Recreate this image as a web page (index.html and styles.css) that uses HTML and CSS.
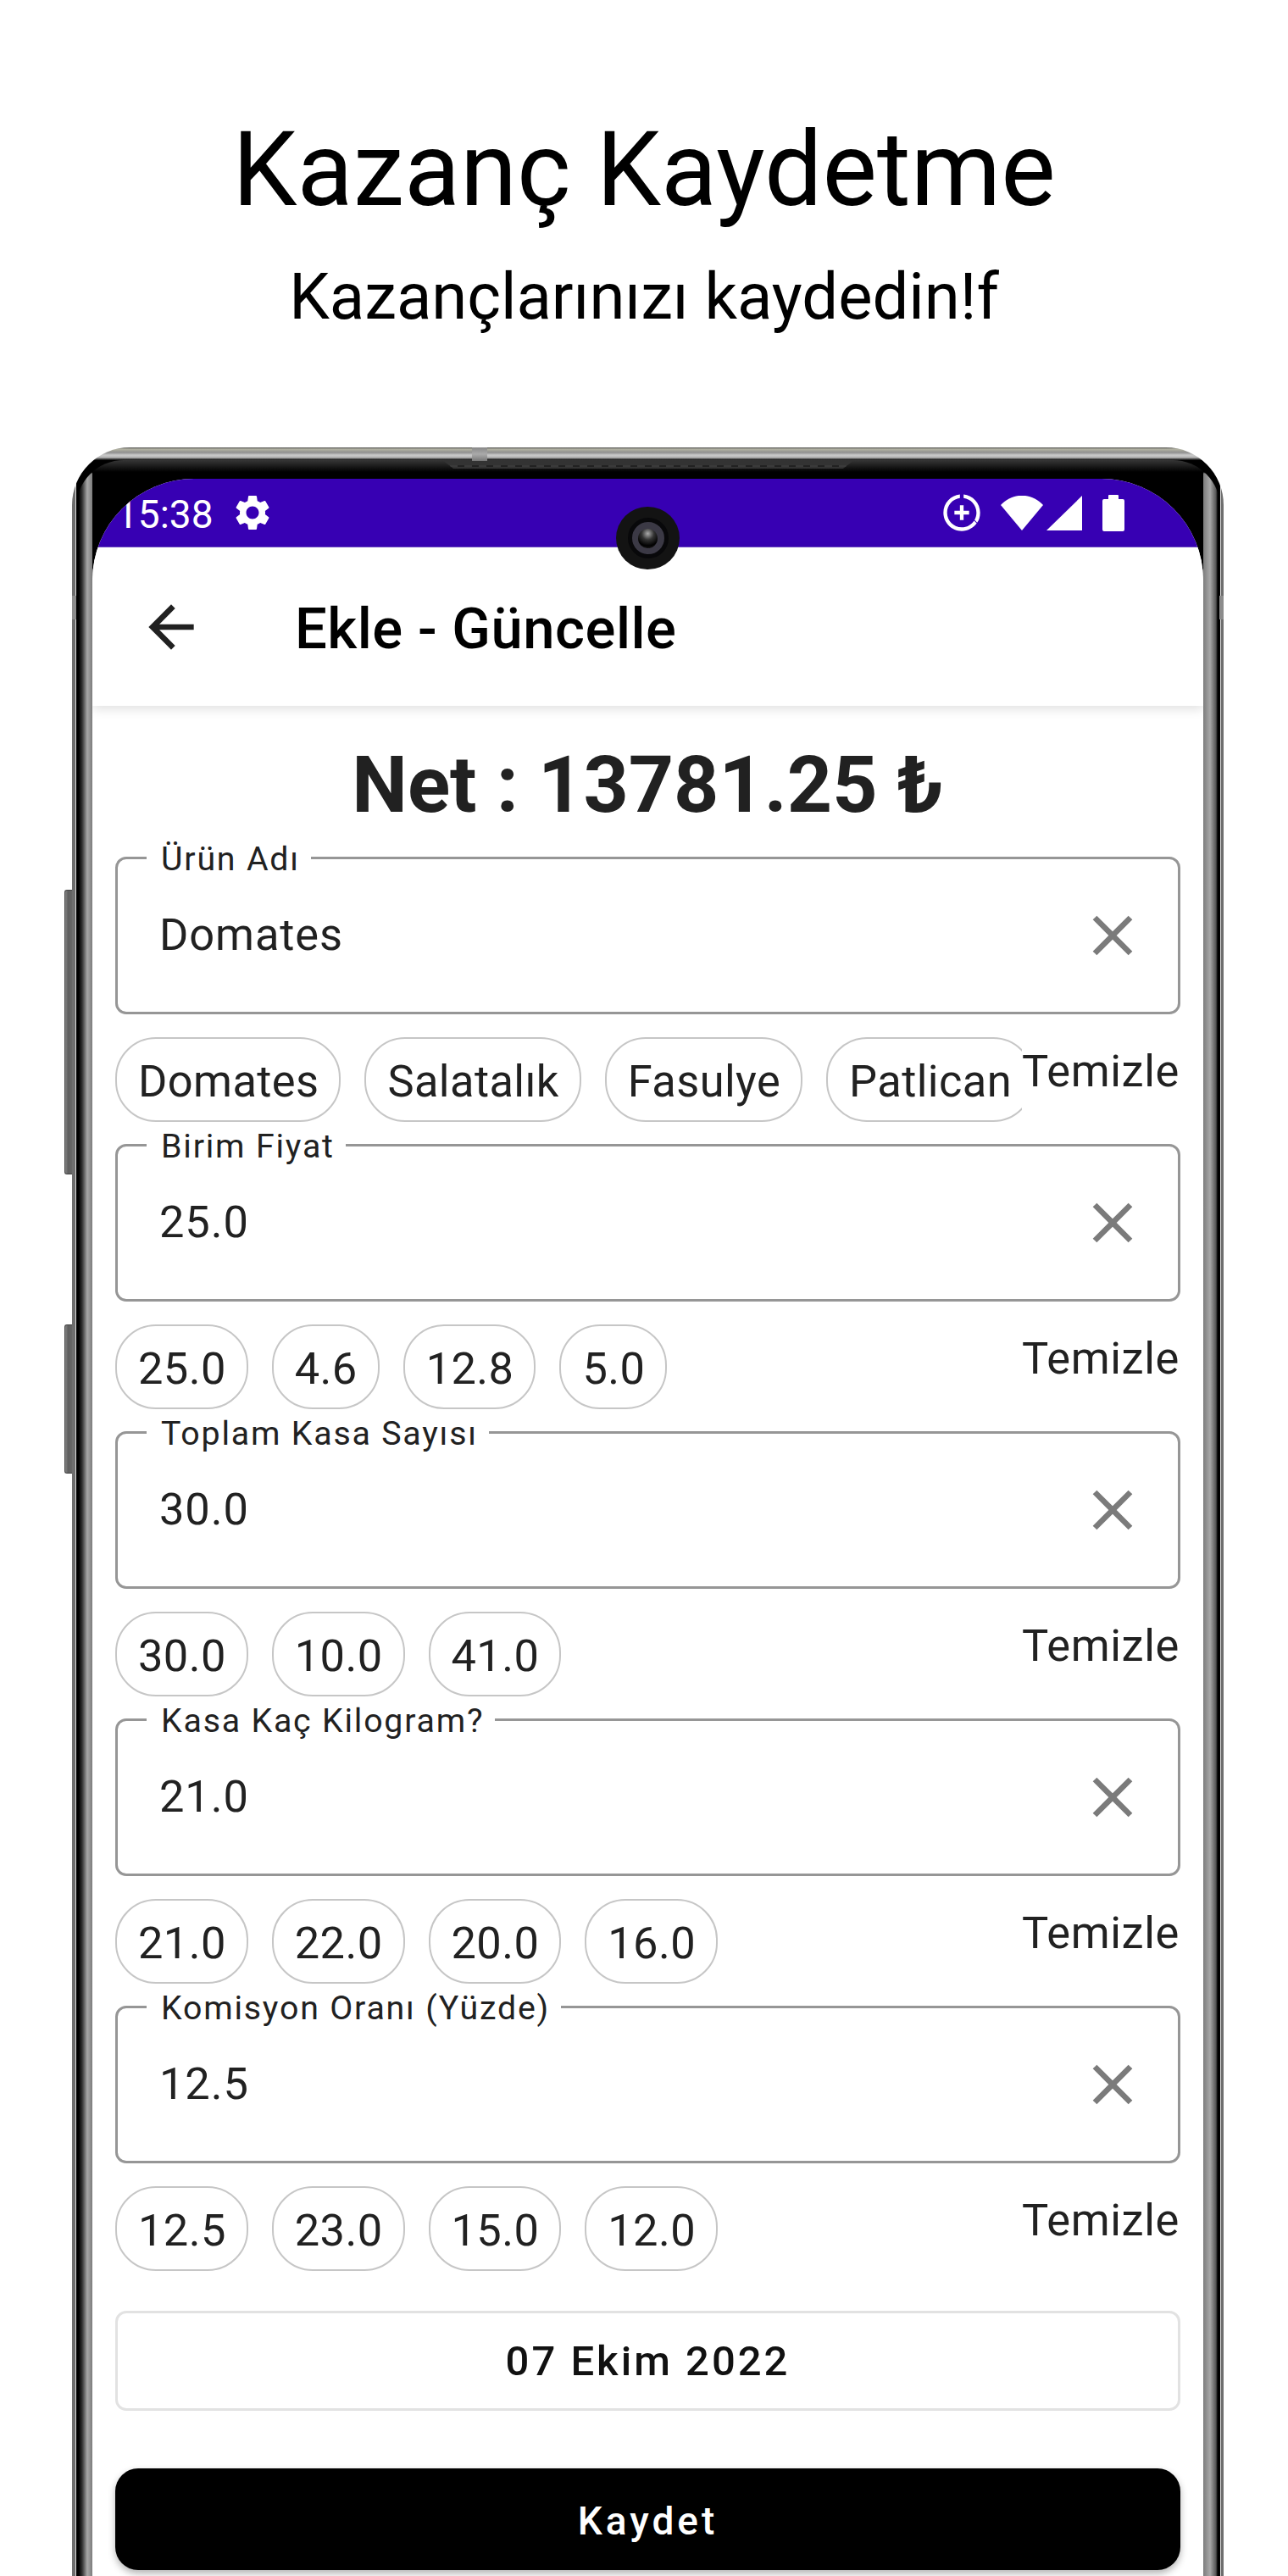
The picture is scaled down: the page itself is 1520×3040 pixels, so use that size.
FILE: index.html
```html
<!DOCTYPE html>
<html lang="tr">
<head>
  <meta charset="UTF-8">
  <title>Kazanç Kaydetme</title>
  <link rel="stylesheet" href="styles.css">
</head>
<body>
  <header class="promo">
    <h1>Kazanç Kaydetme</h1>
    <p>Kazançlarınızı kaydedin!f</p>
  </header>

  <div class="phone">
    <span class="side-btn vol"></span>
    <span class="side-btn power"></span>
    <span class="mark mark-left"></span>
    <span class="mark mark-right"></span>
    <span class="mark mark-top"></span>
    <span class="grille"></span>
    <span class="camera"><span class="camera-ring"><span class="camera-lens"></span></span></span>

    <div class="bezel">
      <div class="screen">
        <div class="status">
          <span class="time">15:38</span>
          <svg class="gear" viewBox="0 0 24 24"><path d="M19.14 12.94c.04-.3.06-.61.06-.94 0-.32-.02-.64-.07-.94l2.03-1.58c.18-.14.23-.41.12-.61l-1.92-3.32c-.12-.22-.37-.29-.59-.22l-2.39.96c-.5-.38-1.03-.7-1.62-.94l-.36-2.54c-.04-.24-.24-.41-.48-.41h-3.84c-.24 0-.43.17-.47.41l-.36 2.54c-.59.24-1.13.57-1.62.94l-2.39-.96c-.22-.08-.47 0-.59.22L2.74 8.87c-.12.21-.08.47.12.61l2.03 1.58c-.05.3-.09.63-.09.94s.02.64.07.94l-2.03 1.58c-.18.14-.23.41-.12.61l1.92 3.32c.12.22.37.29.59.22l2.39-.96c.5.38 1.03.7 1.62.94l.36 2.54c.05.24.24.41.48.41h3.84c.24 0 .44-.17.47-.41l.36-2.54c.59-.24 1.13-.56 1.62-.94l2.39.96c.22.08.47 0 .59-.22l1.92-3.32c.12-.22.07-.47-.12-.61l-2.01-1.58zM12 15.6c-1.98 0-3.6-1.62-3.6-3.6s1.62-3.6 3.6-3.6 3.6 1.62 3.6 3.6-1.62 3.6-3.6 3.6z"/></svg>
          <svg class="saver" viewBox="0 0 24 24"><path d="M11 8v3H8v2h3v3h2v-3h3v-2h-3V8h-2zm2-5.95v2.02c3.95.49 7 3.85 7 7.93 0 1.45-.39 2.81-1.06 3.98l1.46 1.46C21.39 16.26 22 14.2 22 12c0-5.18-3.95-9.45-9-9.95zM12 20c-4.41 0-8-3.59-8-8 0-4.08 3.05-7.44 7-7.93V2.05C5.95 2.55 2 6.82 2 12c0 5.52 4.48 10 10 10 3.36 0 6.33-1.66 8.14-4.19l-1.44-1.44C17.25 18.57 14.79 20 12 20z"/></svg>
          <svg class="wifi" viewBox="0 0 50 41"><path d="M0 11C14-4 36-4 50 11L25 41z"/></svg>
          <svg class="signal" viewBox="0 0 42 41"><path d="M42 0V41H0z"/></svg>
          <svg class="battery" viewBox="0 0 26 43"><path d="M7 1a1 1 0 0 1 1-1h10a1 1 0 0 1 1 1v4h5a2 2 0 0 1 2 2v34a2 2 0 0 1-2 2H2a2 2 0 0 1-2-2V7a2 2 0 0 1 2-2h5z"/></svg>
        </div>

        <div class="appbar">
          <svg class="back" viewBox="0 0 24 24"><path d="M20 11H7.83l5.59-5.59L12 4l-8 8 8 8 1.41-1.41L7.83 13H20v-2z"/></svg>
          <span class="appbar-title">Ekle - Güncelle</span>
        </div>

        <main class="content">
          <div class="net">Net : 13781.25 ₺</div>

          <div class="field">
            <span class="field-label">Ürün Adı</span>
            <span class="field-value">Domates</span>
            <svg class="clear" viewBox="0 0 24 24"><path d="M19 6.41 17.59 5 12 10.59 6.41 5 5 6.41 10.59 12 5 17.59 6.41 19 12 13.41 17.59 19 19 17.59 13.41 12z"/></svg>
          </div>
          <div class="chip-row">
            <div class="chips">
              <span class="chip">Domates</span>
              <span class="chip">Salatalık</span>
              <span class="chip">Fasulye</span>
              <span class="chip">Patlican</span>
            </div>
            <span class="clear-all">Temizle</span>
          </div>

          <div class="field">
            <span class="field-label">Birim Fiyat</span>
            <span class="field-value">25.0</span>
            <svg class="clear" viewBox="0 0 24 24"><path d="M19 6.41 17.59 5 12 10.59 6.41 5 5 6.41 10.59 12 5 17.59 6.41 19 12 13.41 17.59 19 19 17.59 13.41 12z"/></svg>
          </div>
          <div class="chip-row">
            <div class="chips">
              <span class="chip">25.0</span>
              <span class="chip">4.6</span>
              <span class="chip">12.8</span>
              <span class="chip">5.0</span>
            </div>
            <span class="clear-all">Temizle</span>
          </div>

          <div class="field">
            <span class="field-label">Toplam Kasa Sayısı</span>
            <span class="field-value">30.0</span>
            <svg class="clear" viewBox="0 0 24 24"><path d="M19 6.41 17.59 5 12 10.59 6.41 5 5 6.41 10.59 12 5 17.59 6.41 19 12 13.41 17.59 19 19 17.59 13.41 12z"/></svg>
          </div>
          <div class="chip-row">
            <div class="chips">
              <span class="chip">30.0</span>
              <span class="chip">10.0</span>
              <span class="chip">41.0</span>
            </div>
            <span class="clear-all">Temizle</span>
          </div>

          <div class="field">
            <span class="field-label">Kasa Kaç Kilogram?</span>
            <span class="field-value">21.0</span>
            <svg class="clear" viewBox="0 0 24 24"><path d="M19 6.41 17.59 5 12 10.59 6.41 5 5 6.41 10.59 12 5 17.59 6.41 19 12 13.41 17.59 19 19 17.59 13.41 12z"/></svg>
          </div>
          <div class="chip-row">
            <div class="chips">
              <span class="chip">21.0</span>
              <span class="chip">22.0</span>
              <span class="chip">20.0</span>
              <span class="chip">16.0</span>
            </div>
            <span class="clear-all">Temizle</span>
          </div>

          <div class="field">
            <span class="field-label">Komisyon Oranı (Yüzde)</span>
            <span class="field-value">12.5</span>
            <svg class="clear" viewBox="0 0 24 24"><path d="M19 6.41 17.59 5 12 10.59 6.41 5 5 6.41 10.59 12 5 17.59 6.41 19 12 13.41 17.59 19 19 17.59 13.41 12z"/></svg>
          </div>
          <div class="chip-row">
            <div class="chips">
              <span class="chip">12.5</span>
              <span class="chip">23.0</span>
              <span class="chip">15.0</span>
              <span class="chip">12.0</span>
            </div>
            <span class="clear-all">Temizle</span>
          </div>

          <div class="date">07 Ekim 2022</div>
          <div class="save">Kaydet</div>
        </main>
      </div>
    </div>
  </div>
</body>
</html>
```

FILE: styles.css
```css
* { box-sizing: border-box; }
html, body { margin: 0; height: 3040px; overflow: hidden; }
body { background: #fff; font-family: Roboto, sans-serif; color: #212121; }

/* promo text above the device */
.promo { height: 528px; padding-top: 131px; text-align: center; color: #000; }
.promo h1 { margin: 0; font-size: 121.5px; font-weight: 400; line-height: 140px; }
.promo p { margin: 37px 0 0; font-size: 76px; line-height: 84px; }

/* device frame */
.phone {
  position: relative;
  width: 1359px;
  height: 2512px;
  margin-left: 85px;
  padding: 15px 4px 0 5px;
  border-radius: 68px 68px 0 0;
  background:
    linear-gradient(180deg, #4a4a4a 0, #b4b4a4 2px, #8f8f8f 6px, #cacaca 9px, #b4b4b4 12px, #333 14px, #1a1a1a 15px) top / 100% 15px no-repeat,
    linear-gradient(90deg, #6e6e6e 0 4px, #ddd 4px 5px, #000 5px calc(100% - 4px), #ddd calc(100% - 4px) calc(100% - 3px), #6e6e6e calc(100% - 3px));
}
.bezel {
  height: 100%;
  padding: 22px 20px 0 19px;
  border-radius: 56px 56px 0 0;
  background:
    linear-gradient(180deg, #363636 0, #000 14px, rgba(0, 0, 0, 0) 16px) top / 100% 16px no-repeat,
    linear-gradient(90deg, #000 0 3px, #333 7px, #a8a8a8 13px, #7c7c7c 19px, #000 19px calc(100% - 20px), #7c7c7c calc(100% - 20px), #a8a8a8 calc(100% - 12px), #555 calc(100% - 5px), #000 calc(100% - 3px));
}
.screen { height: 100%; overflow: hidden; background: #fff; border-radius: 120px 120px 0 0; }

.side-btn {
  position: absolute;
  left: -9px;
  width: 9px;
  border-radius: 3px 0 0 3px;
  border: 1px solid #444;
  border-right: 0;
  background: linear-gradient(90deg, #888, #5e5e5e 40%, #666);
}
.vol { top: 522px; height: 336px; }
.power { top: 1035px; height: 176px; }
.mark { position: absolute; background: #8c8c8c; }
.mark-left { left: 0; top: 175px; width: 5px; height: 28px; }
.mark-right { right: 0; top: 175px; width: 5px; height: 28px; }
.mark-top { left: 472px; top: 0; width: 18px; height: 16px; background: linear-gradient(180deg, #888, #aaa 50%, #777); }
.grille {
  position: absolute;
  left: 438px;
  top: 16px;
  width: 484px;
  height: 9px;
  background: repeating-linear-gradient(90deg, #222 0 8px, #3a3a3a 8px 17px) 0 5px / 100% 2px no-repeat, #333;
  clip-path: polygon(0 0, 100% 0, 97.5% 100%, 2.5% 100%);
}
.camera {
  position: absolute;
  left: 642px;
  top: 70px;
  z-index: 2;
  display: flex;
  align-items: center;
  justify-content: center;
  width: 75px;
  height: 74px;
  border-radius: 50%;
  background: #131313;
}
.camera-ring {
  display: flex;
  align-items: center;
  justify-content: center;
  width: 48px;
  height: 48px;
  border: 5px solid #08080a;
  border-radius: 50%;
  background: #3b3945;
}
.camera-lens {
  width: 23px;
  height: 23px;
  border-radius: 50%;
  background: radial-gradient(circle at 50% 25%, #aaa 0, #333 35%, #000 70%, #333 100%);
}

/* status bar */
.status {
  display: flex;
  align-items: center;
  height: 81px;
  padding-left: 28px;
  background: #3700b3;
  border-bottom: 1px solid #6e48c6;
  color: #fff;
}
.status svg { fill: #fff; flex: none; }
.time { padding-top: 4px; font-size: 46px; line-height: 54px; }
.gear { width: 50px; height: 50px; margin-left: 21px; }
.saver { width: 52px; height: 52px; margin-left: auto; }
.wifi { width: 50px; height: 41px; margin-left: 20px; }
.signal { width: 42px; height: 41px; margin-left: 4px; }
.battery { width: 26px; height: 43px; margin: 0 93px 0 24px; }

/* app bar */
.appbar {
  position: relative;
  display: flex;
  align-items: center;
  height: 187px;
  padding-left: 53px;
  background: #fff;
  box-shadow: 0 4px 12px rgba(0, 0, 0, 0.12);
}
.back { width: 80px; height: 80px; fill: #212121; }
.appbar-title { margin-left: 106px; padding-top: 4px; color: #000; font-size: 67px; font-weight: 500; letter-spacing: 0.5px; }

.content { padding: 0 27px; }
.net { margin: 39px 0 29px; font-size: 93px; font-weight: 700; line-height: 110px; text-align: center; white-space: nowrap; }

.field {
  position: relative;
  display: flex;
  align-items: center;
  justify-content: space-between;
  height: 186px;
  padding: 0 37px 0 49px;
  border: 3px solid #969696;
  border-radius: 13px;
}
.field-label {
  position: absolute;
  left: 34px;
  top: -20px;
  padding: 0 13px 0 17px;
  background: #fff;
  font-size: 39.3px;
  line-height: 40px;
  letter-spacing: 1.8px;
  white-space: nowrap;
}
.field-value { padding-bottom: 2px; font-size: 52.4px; letter-spacing: 0.9px; }
.clear { width: 80px; height: 80px; fill: #7b7b7b; }

.chip-row { display: flex; margin: 27px 0 26px; }
.chips { display: flex; flex: 1; gap: 28px; min-width: 0; overflow: hidden; }
.chip {
  flex: none;
  display: flex;
  align-items: center;
  height: 100px;
  padding: 4px 24px 0 25px;
  border: 2.5px solid #c6c6c6;
  border-radius: 48px;
  font-size: 52.4px;
  letter-spacing: 0.4px;
}
.clear-all { flex: none; width: 187px; padding-top: 10px; font-size: 52.4px; line-height: 61px; letter-spacing: 0.6px; }

.date {
  height: 118px;
  margin-top: 47px;
  border: 3px solid #e2e2e2;
  border-radius: 13px;
  color: #111;
  font-size: 49px;
  font-weight: 500;
  line-height: 114px;
  letter-spacing: 3px;
  text-align: center;
}
.save {
  height: 120px;
  margin-top: 68px;
  border-radius: 27px;
  background: #000;
  box-shadow: 0 4px 8px rgba(0, 0, 0, 0.3);
  color: #fff;
  font-size: 46px;
  font-weight: 500;
  line-height: 124px;
  letter-spacing: 4px;
  text-align: center;
}
```
